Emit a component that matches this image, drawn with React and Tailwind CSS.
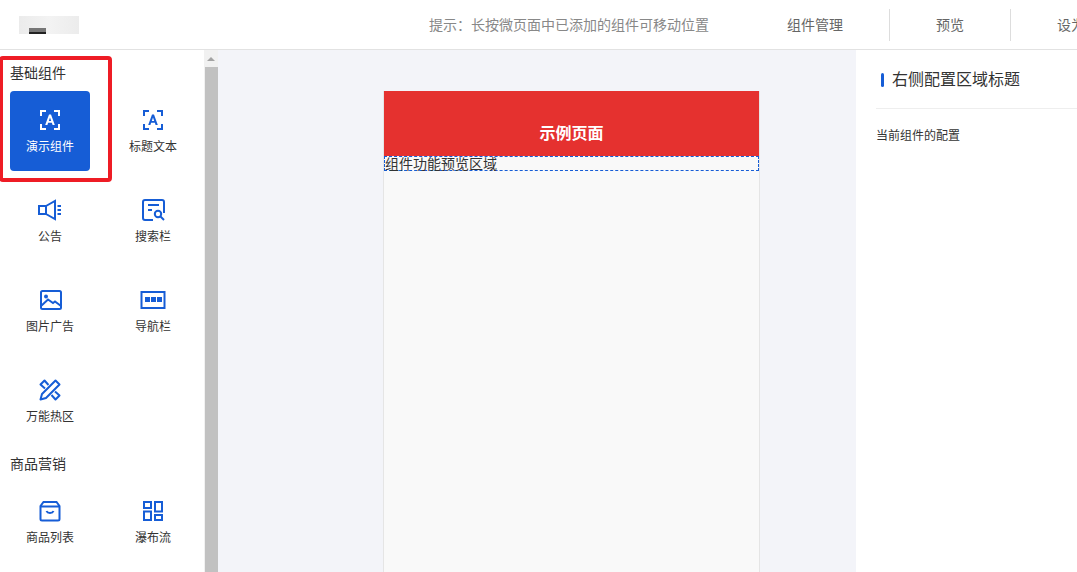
function Frame() {
  return <path d="M3 8V3h5M16 3h5v5M21 16v5h-5M8 21H3v-5" fill="none" stroke="currentColor" strokeWidth="2" />;
}

function TextIcon() {
  return (
    <svg width="24" height="24" viewBox="0 0 24 24">
      <Frame />
      <path d="M11 6.500h2L16.800 17h-2.200l-.7-2.200h-3.800L9.400 17H7.200zM12 9.500l-1.200 3.500h2.400z" fill="currentColor" />
    </svg>
  );
}

function NoticeIcon() {
  return (
    <svg width="24" height="24" viewBox="0 0 24 24" fill="none" stroke="currentColor" strokeWidth="2">
      <path d="M1 8h7v8H1zM8 8l9-5v18l-9-5" />
      <path d="M19.500 8H23M19.500 12H23M19.500 16H23" />
    </svg>
  );
}

function SearchIcon() {
  return (
    <svg width="24" height="24" viewBox="0 0 24 24" fill="none" stroke="currentColor" strokeWidth="2">
      <path d="M12 22H4a2 2 0 0 1-2-2V4a2 2 0 0 1 2-2h17a2 2 0 0 1 2 2v11" />
      <path d="M7 7h11M7 12h4" />
      <circle cx="17" cy="16" r="3.200" />
      <path d="M19.500 18.500 23 22" />
    </svg>
  );
}

function ImageIcon() {
  return (
    <svg width="24" height="24" viewBox="0 0 24 24" fill="none" stroke="currentColor" strokeWidth="2">
      <rect x="3" y="3" width="20" height="18" rx="1.500" />
      <circle cx="8" cy="8.500" r="2" fill="currentColor" stroke="none" />
      <path d="M3 18l7-6.500 5 3.500 2-1.500 6 4.500" />
    </svg>
  );
}

function NavIcon() {
  return (
    <svg width="26" height="24" viewBox="0 0 26 24">
      <rect x="1.500" y="4" width="23" height="16" fill="none" stroke="currentColor" strokeWidth="2" />
      <path d="M5 9h5v5H5zM11 9h5v5h-5zM17 9h5v5h-5z" fill="currentColor" />
    </svg>
  );
}

function HotIcon() {
  return (
    <svg width="24" height="24" viewBox="0 0 24 24" fill="none" stroke="currentColor" strokeWidth="2" strokeLinejoin="round">
      <path d="M17.500 2.500 21.500 6.500 8 20l-5.500 1.500L4 16z" />
      <path d="M10.500 7 6.500 2.500l-4 4 4.500 4M13.500 17l4 4.500 4-4-4.500-4" />
    </svg>
  );
}

function BagIcon() {
  return (
    <svg width="24" height="24" viewBox="0 0 24 24" fill="none" stroke="currentColor" strokeWidth="2">
      <path d="M5.500 3h13L21.500 7v13a1.500 1.500 0 0 1-1.500 1.500H4A1.500 1.500 0 0 1 2.500 20V7zM3 7.500h18" />
      <path d="M8.500 12c1 2.500 6 2.500 7 0" />
    </svg>
  );
}

function FlowIcon() {
  return (
    <svg width="24" height="24" viewBox="0 0 24 24" fill="none" stroke="currentColor" strokeWidth="2">
      <path d="M3 3h7v6H3zM14 3h7v9.500h-7zM3 12.500h7V21H3zM14 16h7v5h-7z" />
    </svg>
  );
}

const basic = [
  { name: '演示组件', icon: <TextIcon />, active: true },
  { name: '标题文本', icon: <TextIcon /> },
  { name: '公告', icon: <NoticeIcon /> },
  { name: '搜索栏', icon: <SearchIcon /> },
  { name: '图片广告', icon: <ImageIcon /> },
  { name: '导航栏', icon: <NavIcon /> },
  { name: '万能热区', icon: <HotIcon /> },
];

const market = [
  { name: '商品列表', icon: <BagIcon /> },
  { name: '瀑布流', icon: <FlowIcon /> },
];

function Item({ item }) {
  return (
    <div
      className={`w-20 h-20 rounded flex flex-col items-center pt-[17px] text-xs leading-[16px] ${
        item.active ? 'bg-[#165DD6] text-white' : 'text-[#165DD6]'
      }`}
    >
      <div className="h-6 flex items-center justify-center">{item.icon}</div>
      <span className={`mt-[7px] ${item.active ? 'text-white' : 'text-[#333333]'}`}>{item.name}</span>
    </div>
  );
}

function Logo() {
  return (
    <div className="w-[60px] h-[18px] shrink-0 ml-[19px] bg-gradient-to-r from-[#ebebeb] via-[#f3f3f3] to-[#ececec] flex items-end pl-[10px]">
      <div className="w-[17px] h-[6px] bg-[#777777] border-b-2 border-[#222222]"></div>
    </div>
  );
}

export default function App() {
  return (
    <div
      className="relative w-[1077px] h-[572px] overflow-hidden bg-white flex flex-col text-[#333333]"
      style={{ fontFamily: '"Liberation Sans", "Noto Sans CJK SC", sans-serif' }}
    >
      <header className="h-[50px] shrink-0 border-b border-[#e2e2e2] flex items-center">
        <Logo />
        <p className="ml-[350px] w-[280px] shrink-0 text-sm text-[#888888] whitespace-nowrap">
          {'提示\uFF1A长按微页面中已添加的组件可移动位置'}
        </p>
        <div className="ml-[32px] flex items-center text-sm text-[#666666] whitespace-nowrap">
          <div className="h-8 shrink-0 px-[46px] flex items-center border-r border-[#dddddd]">组件管理</div>
          <div className="h-8 shrink-0 px-[46px] flex items-center border-r border-[#dddddd]">预览</div>
          <div className="h-8 shrink-0 px-[46px] flex items-center">设为</div>
        </div>
      </header>

      <div className="flex-1 flex min-h-0">
        <aside className="w-[218px] shrink-0 flex">
          <div className="w-[204px] pl-[10px] pt-[13px] overflow-hidden">
            <h3 className="text-sm leading-5">基础组件</h3>
            <div className="mt-[8px] grid grid-cols-[80px_80px] gap-x-[23px] gap-y-[10px]">
              {basic.map((item) => (
                <Item key={item.name} item={item} />
              ))}
            </div>
            <h3 className="mt-[13px] text-sm leading-5">商品营销</h3>
            <div className="mt-[8px] grid grid-cols-[80px_80px] gap-x-[23px] gap-y-[10px]">
              {market.map((item) => (
                <Item key={item.name} item={item} />
              ))}
            </div>
          </div>
          <div className="w-[14px] bg-[#f1f1f1] flex flex-col">
            <div className="h-[17px] flex items-center justify-center">
              <div className="w-0 h-0 border-x-[4px] border-x-transparent border-b-[4px] border-b-[#a3a3a3]"></div>
            </div>
            <div className="flex-1 ml-[1px] bg-[#c1c1c1]"></div>
          </div>
        </aside>

        <main className="w-[638px] shrink-0 bg-[#f3f4f9] pt-[41px] pl-[165px]">
          <div className="w-[377px] h-[600px] bg-[#f9f9f9] border-x border-[#e5e5e5]">
            <div className="h-[65px] bg-[#e5312f] flex items-end justify-center pb-[10px] text-base leading-6 font-bold text-white">
              示例页面
            </div>
            <div className="h-[15px] border border-dashed border-[#165DD6] text-sm leading-[15px] whitespace-nowrap">
              组件功能预览区域
            </div>
          </div>
        </main>

        <section className="flex-1 bg-white pl-5">
          <div className="h-[59px] border-b border-[#eeeeee] flex items-center pt-[1px]">
            <span className="w-[3px] h-[14px] rounded-sm bg-[#165DD6] ml-[5px]"></span>
            <h2 className="ml-2 text-base text-[#333333]">右侧配置区域标题</h2>
          </div>
          <p className="mt-[19px] text-xs leading-4">当前组件的配置</p>
        </section>
      </div>

      {/* red annotation box around the first group */}
      <div className="absolute -left-px top-[56px] w-[113px] h-[126px] border-4 border-[#ee1c25] rounded-sm pointer-events-none"></div>
    </div>
  );
}
